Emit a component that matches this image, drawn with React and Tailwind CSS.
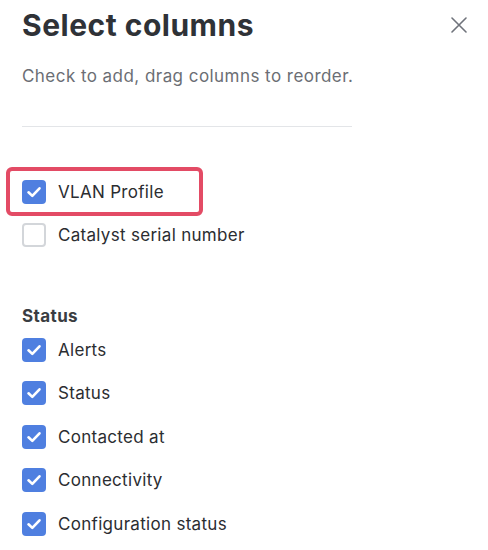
import React from "react";

function Check({ checked }) {
  if (!checked) {
    return <div className="w-6 h-6 rounded-[4px] border-2 border-[#d3d6da] bg-white shrink-0" />;
  }
  return (
    <div className="w-6 h-6 rounded-[4px] bg-[#4f7fe0] shrink-0 flex items-center justify-center">
      <svg width="24" height="24" viewBox="0 0 24 24" fill="none">
        <path d="M6.5 12.3 L10.3 15.9 L17.5 8.3" stroke="white" strokeWidth="2.6" strokeLinecap="round" strokeLinejoin="round" />
      </svg>
    </div>
  );
}

function Row({ label, checked, highlight }) {
  return (
    <div className="relative h-[43.5px] flex items-center gap-3">
      {highlight && (
        <div className="absolute left-[-16px] top-[-3px] w-[197px] h-[49px] border-4 border-[#e34b65] rounded-[6px] pointer-events-none" />
      )}
      <Check checked={checked} />
      <span className="text-[17px] tracking-[0.3px] text-[#2b2d31] leading-6">{label}</span>
    </div>
  );
}

export default function App() {
  return (
    <div className="w-[488px] h-[550px] bg-white overflow-hidden pl-[22px] pr-[21px] font-['Inter',sans-serif]">
      <div className="flex items-center justify-between mt-[7px] h-[36px]">
        <h1 className="text-[30px] leading-[36px] font-bold text-[#2f3237] tracking-[0.5px]">Select columns</h1>
        <svg width="16" height="16" viewBox="0 0 16 16">
          <path d="M1 1 L15 15 M15 1 L1 15" stroke="#6f737b" strokeWidth="1.6" strokeLinecap="round" />
        </svg>
      </div>
      <p className="mt-[21px] text-[17px] tracking-[0.45px] leading-6 text-[#6b6e74]">Check to add, drag columns to reorder.</p>
      <div className="mt-[38px] h-px w-[330px] bg-[#e3e5e8]" />
      <div className="mt-[43px]">
        <Row label="VLAN Profile" checked highlight />
        <Row label="Catalyst serial number" checked={false} />
      </div>
      <div className="mt-[47px] text-[17px] tracking-[0.4px] leading-6 font-bold text-[#3a3d42]">Status</div>
      <div>
        <Row label="Alerts" checked />
        <Row label="Status" checked />
        <Row label="Contacted at" checked />
        <Row label="Connectivity" checked />
        <Row label="Configuration status" checked />
      </div>
    </div>
  );
}
